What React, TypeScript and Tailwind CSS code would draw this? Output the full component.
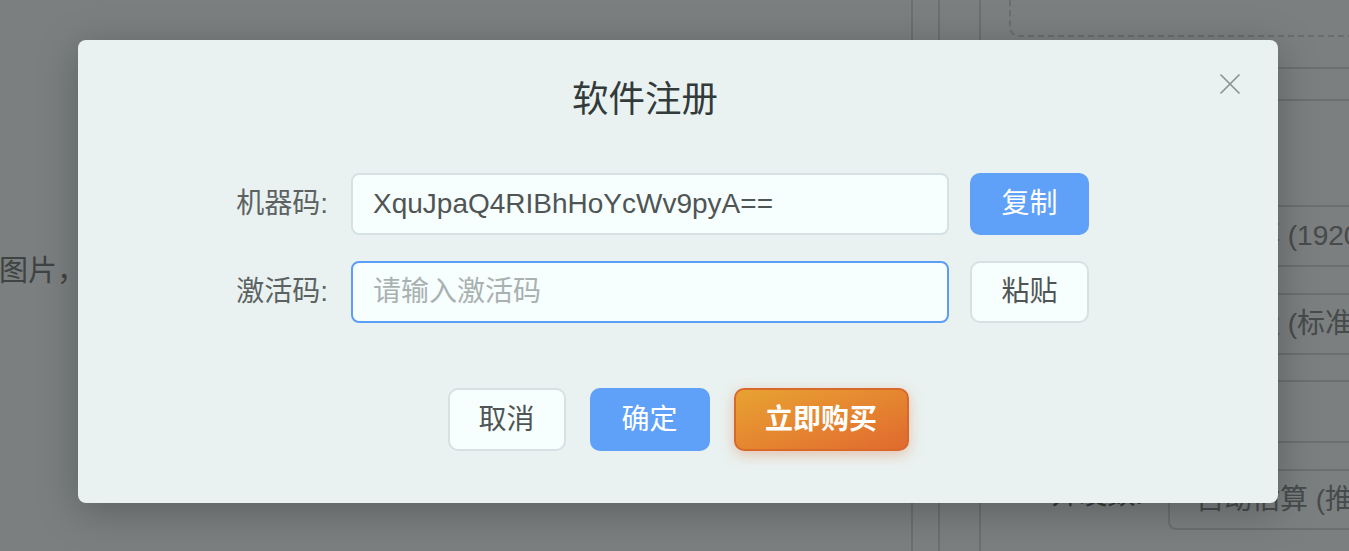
import { useState } from "react";

const FONT = "font-['Liberation_Sans','Noto_Sans_CJK_SC',sans-serif]";

const SETTINGS = [
  { h: "h-[62px]", mt: "mt-[104px]", label: "分辨率:", value: "分辨率 (1920×1080)" },
  { h: "h-[62px]", mt: "mt-[26px]", label: "画质:", value: "中质量 (标准)" },
  { h: "h-[63px]", mt: "mt-[25px]", label: "格式:", value: "MP4" },
  { h: "h-[61px]", mt: "mt-[26px]", label: "并发数:", value: "自动估算 (推荐)" },
];

function BackgroundPage() {
  return (
    <div className={`flex h-[551px] w-full overflow-hidden bg-[#f6fefe] text-[#7e8686] ${FONT}`}>
      <div className="w-[913px] shrink-0 border-r-2 border-[#d6dede]">
        <p className="-ml-[1px] mt-[250px] text-[29px] leading-[42px]">图片，</p>
      </div>
      <div className="w-[27px] shrink-0 border-r-2 border-[#d6dede]" />
      <div className="w-[41px] shrink-0 border-r-2 border-[#d6dede]" />
      <div className="flex-1 pl-[28px]">
        <div className="-mt-[60px] flex h-[97px] w-[400px] items-end justify-center rounded-[10px] border-2 border-dashed border-[#d2dada] pb-[28px] text-[28px] text-[#222]">
          点击选择音频文件
        </div>
        <div className="mt-[30px] h-[34px] w-[400px] border-y-2 border-[#d6dede]" />
        {SETTINGS.map((s) => (
          <div key={s.label} className={`flex items-center ${s.mt}`}>
            <span className="-mt-[10px] w-[134px] shrink-0 text-right text-[28px] text-[#6c7474]">{s.label}</span>
            <div
              className={`ml-[25px] flex ${s.h} w-[400px] shrink-0 items-center rounded-[8px] border-2 border-[#d6dede] pl-[26px] text-[28px] whitespace-nowrap text-[#8e9696]`}
            >
              {s.value}
            </div>
          </div>
        ))}
      </div>
    </div>
  );
}

function CloseIcon() {
  return (
    <svg width="20" height="20" viewBox="0 0 20 20" fill="none" stroke="#8b9595" strokeWidth="1.7" strokeLinecap="round">
      <path d="M1 1 19 19" />
      <path d="M19 1 1 19" />
    </svg>
  );
}

function RegisterDialog() {
  const [code, setCode] = useState("");
  const machineCode = "XquJpaQ4RIBhHoYcWv9pyA==";

  return (
    <div
      className={`relative ml-[78px] h-[463px] w-[1200px] rounded-[8px] bg-[#e9f2f1] pt-[33px] shadow-[0_8px_40px_rgba(0,0,0,0.25)] ${FONT}`}
    >
      <button className="absolute right-[38px] top-[34px] flex h-[20px] w-[20px] items-center justify-center">
        <CloseIcon />
      </button>

      <h2 className="h-[54px] pr-[66px] text-center text-[36.5px] leading-[54px] font-normal text-[#333a3a]">软件注册</h2>

      <div className="mt-[46px] flex flex-col gap-[26px]">
        <div className="flex items-center pl-[130px]">
          <label className="w-[120px] text-right text-[28px] text-[#5c6262]">机器码:</label>
          <input
            readOnly
            value={machineCode}
            className="ml-[23px] h-[62px] w-[598px] rounded-[8px] border-2 border-[#d6e1e3] bg-[#f7fefe] pl-[20px] text-[28px] text-[#4f5555] outline-none"
          />
          <button className="ml-[21px] h-[62px] w-[119px] rounded-[10px] bg-[#5fa0f8] text-[28px] text-white">复制</button>
        </div>
        <div className="flex items-center pl-[130px]">
          <label className="w-[120px] text-right text-[28px] text-[#5c6262]">激活码:</label>
          <input
            value={code}
            onChange={(e) => setCode(e.target.value)}
            placeholder="请输入激活码"
            className="ml-[23px] h-[62px] w-[598px] rounded-[8px] border-2 border-[#5c9ef5] bg-[#f7fefe] pl-[20px] text-[28px] text-[#4f5555] outline-none placeholder:text-[#a9b1b1]"
          />
          <button className="ml-[21px] h-[62px] w-[119px] rounded-[10px] border-2 border-[#d6e1e3] bg-[#f7fefe] text-[28px] text-[#4f5555]">
            粘贴
          </button>
        </div>
      </div>

      <div className="mt-[65px] flex justify-center gap-[24px]">
        <button className="h-[63px] w-[118px] rounded-[10px] border-2 border-[#d6e1e3] bg-[#f7fefe] text-[28px] text-[#4f5555]">取消</button>
        <button className="h-[63px] w-[120px] rounded-[10px] bg-[#5fa0f8] text-[28px] text-white">确定</button>
        <button className="h-[63px] w-[175px] rounded-[10px] border-2 border-[#d8692a] bg-gradient-to-br from-[#e8a232] to-[#e0692e] text-[28px] font-bold text-white shadow-[0_4px_14px_rgba(224,105,46,0.35)]">
          立即购买
        </button>
      </div>
    </div>
  );
}

export default function App() {
  return (
    <div className="relative h-[551px] w-full overflow-hidden">
      <BackgroundPage />
      <div className="absolute inset-0 flex bg-black/50 pt-[40px]">
        <RegisterDialog />
      </div>
    </div>
  );
}
